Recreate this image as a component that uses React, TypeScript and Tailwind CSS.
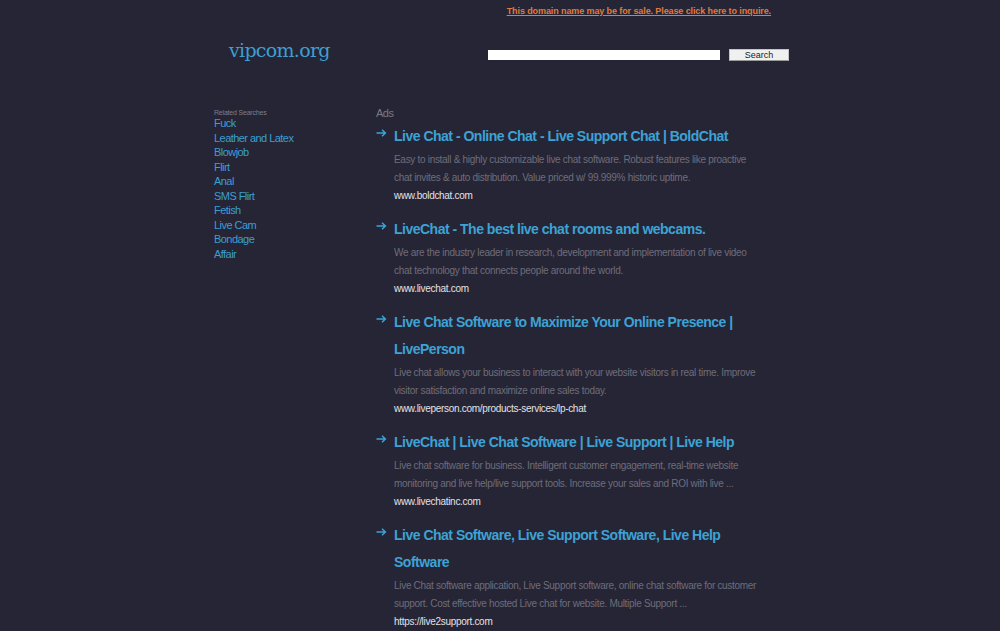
import React from "react";

const related = [
  "Fuck",
  "Leather and Latex",
  "Blowjob",
  "Flirt",
  "Anal",
  "SMS Flirt",
  "Fetish",
  "Live Cam",
  "Bondage",
  "Affair",
];

const ads = [
  {
    title: "Live Chat - Online Chat - Live Support Chat | BoldChat",
    desc: "Easy to install & highly customizable live chat software. Robust features like proactive chat invites & auto distribution. Value priced w/ 99.999% historic uptime.",
    url: "www.boldchat.com",
  },
  {
    title: "LiveChat - The best live chat rooms and webcams.",
    desc: "We are the industry leader in research, development and implementation of live video chat technology that connects people around the world.",
    url: "www.livechat.com",
  },
  {
    title: "Live Chat Software to Maximize Your Online Presence | LivePerson",
    desc: "Live chat allows your business to interact with your website visitors in real time. Improve visitor satisfaction and maximize online sales today.",
    url: "www.liveperson.com/products-services/lp-chat",
  },
  {
    title: "LiveChat | Live Chat Software | Live Support | Live Help",
    desc: "Live chat software for business. Intelligent customer engagement, real-time website monitoring and live help/live support tools. Increase your sales and ROI with live ...",
    url: "www.livechatinc.com",
  },
  {
    title: "Live Chat Software, Live Support Software, Live Help Software",
    desc: "Live Chat software application, Live Support software, online chat software for customer support. Cost effective hosted Live chat for website. Multiple Support ...",
    url: "https://live2support.com",
  },
];

function Arrow() {
  return (
    <svg width="11" height="8" viewBox="0 0 11 8" className="mt-[6px] shrink-0">
      <path d="M0.5 4h9M6 0.8l3.4 3.2L6 7.2" fill="none" stroke="#3da2d4" strokeWidth="1.5" />
    </svg>
  );
}

export default function App() {
  return (
    <div className="h-[631px] overflow-hidden bg-[#262536] font-['Liberation_Sans',Arial,sans-serif]">
      {/* Sale notice */}
      <div className="flex justify-end pr-[229px] pt-[6px] h-[17px]">
        <a href="#" className="text-[9px] font-bold text-[#e07b3c] underline leading-[11px] tracking-[-0.1px]">
          This domain name may be for sale. Please click here to inquire.
        </a>
      </div>

      {/* Header */}
      <div className="flex items-start h-[87px]">
        <div className="ml-[229px] w-[259px] pt-[21px] text-[19px] leading-[24px] text-[#3d9fd0] font-['DejaVu_Serif','Liberation_Serif',serif] tracking-[-0.7px]">
          vipcom.org
        </div>
        <div className="flex items-center pt-[32px]">
          <input className="w-[232px] h-[10px] bg-white border-0 outline-none" />
          <button className="ml-[9px] w-[60px] h-[12px] bg-[#f0f0f0] text-[9px] leading-[10px] text-[#222] border border-[#c4c4c4] border-b-[#9a9a9a]">
            Search
          </button>
        </div>
      </div>

      <div className="flex">
        {/* Related searches */}
        <div className="ml-[214px] w-[162px]">
          <div className="text-[7px] text-[#7d7d89] leading-[10px] pt-[4px] tracking-[-0.2px]">Related Searches</div>
          <ul className="mt-[-2px]">
            {related.map((r) => (
              <li key={r} className="text-[11px] leading-[14.5px] text-[#3b9fd1] tracking-[-0.55px]">
                {r}
              </li>
            ))}
          </ul>
        </div>

        {/* Ads */}
        <div className="w-[386px]">
          <div className="text-[11px] leading-[14px] text-[#7a7a86] pt-[2px] tracking-[-0.5px]">Ads</div>
          <div className="flex flex-col gap-[11px] mt-[3px]">
            {ads.map((a) => (
              <div key={a.url} className="flex gap-[7px]">
                <Arrow />
                <div className="flex-1">
                  <div className="text-[14px] font-bold leading-[27px] text-[#3da2d4] tracking-[-0.5px]">{a.title}</div>
                  <div className="pt-[1px] text-[10px] leading-[18px] text-[#6e6d79] tracking-[-0.3px]">{a.desc}</div>
                  <div className="text-[10px] leading-[18px] text-[#e2e2e6] tracking-[-0.3px]">{a.url}</div>
                </div>
              </div>
            ))}
          </div>
        </div>
      </div>
    </div>
  );
}
